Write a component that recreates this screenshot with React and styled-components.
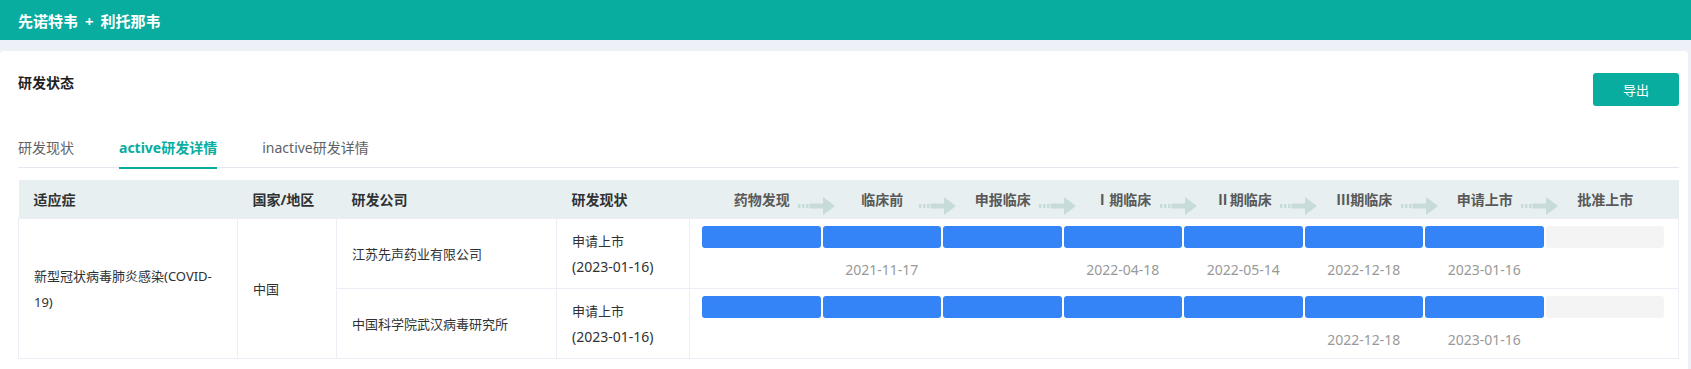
import React from "react";
import styled, { createGlobalStyle } from "styled-components";

const GlobalStyle = createGlobalStyle`
  * { box-sizing: border-box; }
  html, body { margin: 0; padding: 0; }
  body {
    background: #edf1f7;
    font-family: "Noto Sans", "Noto Sans CJK SC", sans-serif;
    color: #303133;
  }
`;

const TEAL = "#08ad9f";

const TopBar = styled.header`
  height: 40px;
  background: ${TEAL};
  display: flex;
  align-items: center;
  padding-left: 18px;
  color: #fff;
  font-size: 15px;
  font-weight: 700;
  word-spacing: 3px;
`;

const Card = styled.main`
  margin-top: 11px;
  margin-right: 3px;
  background: #fff;
  border-radius: 4px 4px 0 0;
  padding: 22px 9px 20px 18px;
  min-height: 330px;
`;

const TitleRow = styled.div`
  display: flex;
  justify-content: space-between;
  align-items: flex-start;
`;

const Title = styled.h2`
  margin: 0;
  font-size: 14px;
  line-height: 20px;
  font-weight: 700;
  color: #1f1f1f;
`;

const ExportButton = styled.button`
  width: 86px;
  height: 33px;
  border: none;
  border-radius: 3px;
  background: ${TEAL};
  color: #fff;
  font-family: inherit;
  font-size: 13px;
  cursor: pointer;
`;

const TabNav = styled.nav`
  margin-top: 22px;
  display: flex;
  gap: 45px;
  height: 40px;
  border-bottom: 1px solid #e4e7ed;
`;

const Tab = styled.div`
  position: relative;
  height: 39px;
  line-height: 39px;
  font-size: 14px;
  font-weight: ${(p) => (p.$active ? 700 : 400)};
  color: ${(p) => (p.$active ? TEAL : "#606266")};
  &::after {
    content: "";
    display: ${(p) => (p.$active ? "block" : "none")};
    position: absolute;
    left: 0;
    right: 0;
    bottom: -2px;
    height: 2px;
    background: ${TEAL};
  }
`;

const Table = styled.table`
  margin-top: 12px;
  width: 100%;
  table-layout: fixed;
  border-collapse: collapse;
  font-size: 13px;
`;

const Th = styled.th`
  height: 38px;
  background: #e7eff0;
  text-align: left;
  padding: 0 15px;
  font-size: 14px;
  font-weight: 700;
  color: #303133;
  white-space: nowrap;
`;

const PhaseTh = styled.th`
  height: 38px;
  background: #e7eff0;
  padding: 0 14px 0 13px;
`;

const Td = styled.td`
  height: 70px;
  border: 1px solid #ebeef5;
  padding: 0 15px;
  line-height: 26px;
  color: #303133;
  vertical-align: middle;
`;

const PhaseTd = styled.td`
  height: 70px;
  border: 1px solid #ebeef5;
  padding: 7px 14px 0 12px;
  vertical-align: top;
`;

const PhaseGrid = styled.div`
  display: grid;
  grid-template-columns: repeat(8, 1fr);
  column-gap: 2px;
`;

const PhaseLabel = styled.div`
  position: relative;
  text-align: center;
  font-family: "Noto Sans CJK SC", sans-serif;
  font-size: 14px;
  font-weight: 700;
  color: #595959;
  line-height: 38px;
  white-space: nowrap;
`;

const ArrowWrap = styled.span`
  position: absolute;
  right: -14px;
  top: 50%;
  transform: translateY(-50%);
  width: 37px;
  height: 18px;
  display: block;
`;

const Step = styled.div`
  display: flex;
  flex-direction: column;
  align-items: stretch;
`;

const Bar = styled.div`
  height: 22px;
  border-radius: 3px;
  background: ${(p) => (p.$done ? "#3584f7" : "#f4f4f5")};
`;

const DateText = styled.div`
  margin-top: 12px;
  height: 20px;
  line-height: 20px;
  text-align: center;
  font-size: 14px;
  color: #999;
`;

const StatusDate = styled.span`
  font-size: 14px;
`;

const Arrow = () => (
  <ArrowWrap>
    <svg width="37" height="18" viewBox="0 0 37 18">
      <g fill="#c7dcd9">
        <rect x="0" y="7" width="2.5" height="4" />
        <rect x="4" y="7" width="2.5" height="4" />
        <rect x="8" y="7" width="2.5" height="4" />
        <rect x="11.5" y="6.5" width="15" height="5" />
        <polygon points="25,0 37,9 25,18" />
      </g>
    </svg>
  </ArrowWrap>
);

const phases = ["药物发现", "临床前", "申报临床", "Ⅰ期临床", "Ⅱ期临床", "Ⅲ期临床", "申请上市", "批准上市"];

const rows = [
  {
    company: "江苏先声药业有限公司",
    status: "申请上市",
    date: "(2023-01-16)",
    done: 7,
    dates: [null, "2021-11-17", null, "2022-04-18", "2022-05-14", "2022-12-18", "2023-01-16", null],
  },
  {
    company: "中国科学院武汉病毒研究所",
    status: "申请上市",
    date: "(2023-01-16)",
    done: 7,
    dates: [null, null, null, null, null, "2022-12-18", "2023-01-16", null],
  },
];

const PhaseCell = ({ row }) => (
  <PhaseTd>
    <PhaseGrid>
      {phases.map((p, i) => (
        <Step key={p}>
          <Bar $done={i < row.done} />
          <DateText>{row.dates[i] || ""}</DateText>
        </Step>
      ))}
    </PhaseGrid>
  </PhaseTd>
);

export default function App() {
  return (
    <>
      <GlobalStyle />
      <TopBar>先诺特韦 + 利托那韦</TopBar>
      <Card>
        <TitleRow>
          <Title>研发状态</Title>
          <ExportButton>导出</ExportButton>
        </TitleRow>
        <TabNav>
          <Tab>研发现状</Tab>
          <Tab $active>active研发详情</Tab>
          <Tab>inactive研发详情</Tab>
        </TabNav>
        <Table>
          <colgroup>
            <col style={{ width: 219 }} />
            <col style={{ width: 99 }} />
            <col style={{ width: 220 }} />
            <col style={{ width: 133 }} />
            <col />
          </colgroup>
          <thead>
            <tr>
              <Th>适应症</Th>
              <Th>国家/地区</Th>
              <Th>研发公司</Th>
              <Th>研发现状</Th>
              <PhaseTh>
                <PhaseGrid>
                  {phases.map((p, i) => (
                    <PhaseLabel key={p}>
                      {p}
                      {i < phases.length - 1 && <Arrow />}
                    </PhaseLabel>
                  ))}
                </PhaseGrid>
              </PhaseTh>
            </tr>
          </thead>
          <tbody>
            {rows.map((row, idx) => (
              <tr key={row.company}>
                {idx === 0 && (
                  <>
                    <Td rowSpan={2}>新型冠状病毒肺炎感染(COVID-19)</Td>
                    <Td rowSpan={2}>中国</Td>
                  </>
                )}
                <Td>{row.company}</Td>
                <Td>
                  {row.status}
                  <br />
                  <StatusDate>{row.date}</StatusDate>
                </Td>
                <PhaseCell row={row} />
              </tr>
            ))}
          </tbody>
        </Table>
      </Card>
    </>
  );
}
